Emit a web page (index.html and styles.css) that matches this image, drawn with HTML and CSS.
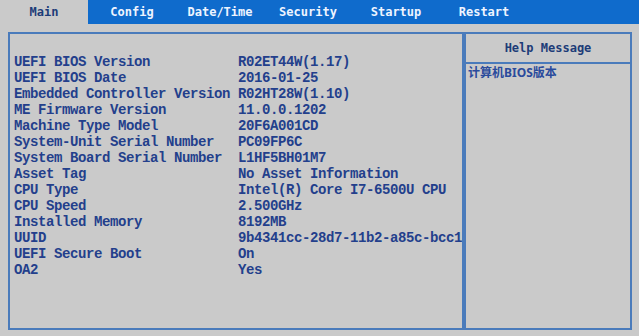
FILE: index.html
```html
<!DOCTYPE html>
<html lang="en">
<head>
  <meta charset="UTF-8">
  <title>BIOS Setup - Main</title>
  <link rel="stylesheet" href="styles.css">
</head>
<body>
  <!-- top menu tabs -->
  <div class="tabs">
    <div class="tab active">Main</div>
    <div class="tab">Config</div>
    <div class="tab">Date/Time</div>
    <div class="tab">Security</div>
    <div class="tab">Startup</div>
    <div class="tab">Restart</div>
  </div>

  <div class="screen">
    <!-- system information -->
    <div class="info">
      <div class="row"><span class="label">UEFI BIOS Version</span><span class="value">R02ET44W(1.17)</span></div>
      <div class="row"><span class="label">UEFI BIOS Date</span><span class="value">2016-01-25</span></div>
      <div class="row"><span class="label">Embedded Controller Version</span><span class="value">R02HT28W(1.10)</span></div>
      <div class="row"><span class="label">ME Firmware Version</span><span class="value">11.0.0.1202</span></div>
      <div class="row"><span class="label">Machine Type Model</span><span class="value">20F6A001CD</span></div>
      <div class="row"><span class="label">System-Unit Serial Number</span><span class="value">PC09FP6C</span></div>
      <div class="row"><span class="label">System Board Serial Number</span><span class="value">L1HF5BH01M7</span></div>
      <div class="row"><span class="label">Asset Tag</span><span class="value">No Asset Information</span></div>
      <div class="row"><span class="label">CPU Type</span><span class="value">Intel(R) Core I7-6500U CPU</span></div>
      <div class="row"><span class="label">CPU Speed</span><span class="value">2.500GHz</span></div>
      <div class="row"><span class="label">Installed Memory</span><span class="value">8192MB</span></div>
      <div class="row"><span class="label">UUID</span><span class="value">9b4341cc-28d7-11b2-a85c-bcc1</span></div>
      <div class="row"><span class="label">UEFI Secure Boot</span><span class="value">On</span></div>
      <div class="row"><span class="label">OA2</span><span class="value">Yes</span></div>
    </div>

    <!-- help panel -->
    <div class="help">
      <div class="help-title">Help Message</div>
      <div class="help-text">计算机BIOS版本</div>
    </div>
  </div>
</body>
</html>
```

FILE: styles.css
```css
body {
  margin: 0;
  background: #cacaca;
  font-family: "Liberation Mono", monospace;
  overflow: hidden;
}

.tabs {
  display: flex;
  height: 24px;
  background: #0f6bcc;
}

.tab {
  width: 88px;
  line-height: 24px;
  text-align: center;
  font-family: "DejaVu Sans Mono", monospace;
  font-size: 12px;
  font-weight: bold;
  color: #eef4ff;
}

.tab.active {
  background: #cacaca;
  color: #1d3c78;
}

.screen {
  display: flex;
  height: 298px;
  margin: 8px 7px 0 8px;
}

.info {
  width: 456px;
  border: 2px solid #4a7bbb;
  padding: 20px 0 0 4px;
  box-sizing: border-box;
  overflow: hidden;
}

.row {
  display: flex;
  height: 16px;
  line-height: 16px;
  font-size: 14px;
  letter-spacing: -0.4px;
  font-weight: bold;
  color: #233f8c;
  white-space: nowrap;
}

.label {
  width: 224px;
  flex: none;
}

.help {
  width: 168px;
  border: 2px solid #4a7bbb;
  box-sizing: border-box;
}

.help-title {
  height: 28px;
  line-height: 29px;
  text-align: center;
  border-bottom: 2px solid #4a7bbb;
  font-family: "DejaVu Sans Mono", monospace;
  font-size: 12px;
  font-weight: bold;
  color: #1d3c78;
}

.help-text {
  padding: 1px 0 0 2px;
  line-height: 16px;
  font-family: "Noto Sans", "Noto Sans CJK SC", sans-serif;
  font-size: 12px;
  font-weight: bold;
  color: #2a4b9c;
}
```
